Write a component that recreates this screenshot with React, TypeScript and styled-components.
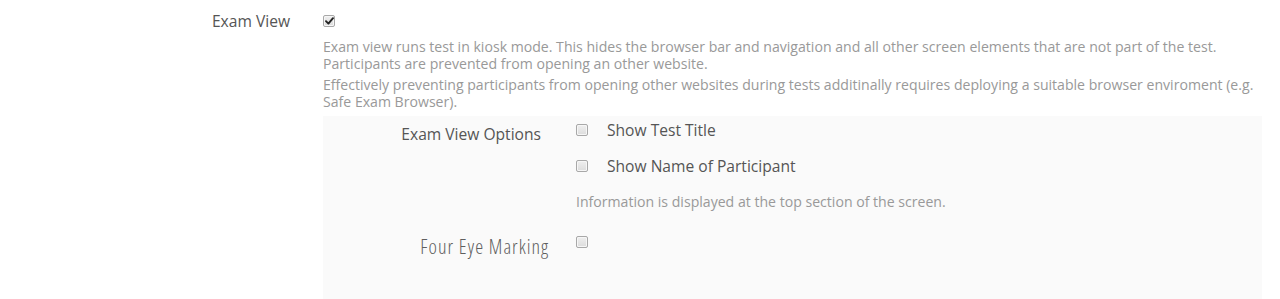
import React, { FC } from 'react';
import styled, { createGlobalStyle } from 'styled-components';

const GlobalStyle = createGlobalStyle`
    html, body {
        margin: 0;
        padding: 0;
        background: #ffffff;
    }
    body {
        font-family: "Open Sans", "Liberation Sans", sans-serif;
        color: #555555;
    }
`

type CheckProps = { checked?: boolean }

const CheckBox: FC<CheckProps> = ({ checked }) => (
    <CheckBoxStyled>
        {checked && (
            <svg width="9" height="8" viewBox="0 0 9 8">
                <path d="M1 4.2 L3.4 6.6 L8 1.2" fill="none" stroke="#222" strokeWidth="1.9" strokeLinecap="round" strokeLinejoin="round" />
            </svg>
        )}
    </CheckBoxStyled>
)

export default function App() {
    return (<PageWrapper>
        <GlobalStyle />
        <FormRow>
            <MainLabel>Exam View</MainLabel>
            <ControlColumn>
                <CheckLine>
                    <CheckBox checked />
                </CheckLine>
                <HelpText>
                    Exam view runs test in kiosk mode. This hides the browser bar and navigation and all other screen elements that are not part of the test.<br />
                    Participants are prevented from opening an other website.
                </HelpText>
                <HelpText $spaced>
                    Effectively preventing participants from opening other websites during tests additinally requires deploying a suitable browser enviroment (e.g. Safe Exam Browser).
                </HelpText>

                <SubPanel>
                    <SubRow>
                        <SubLabel>Exam View Options</SubLabel>
                        <OptionList>
                            <OptionItem>
                                <CheckBox />
                                <OptionText>Show Test Title</OptionText>
                            </OptionItem>
                            <OptionItem>
                                <CheckBox />
                                <OptionText>Show Name of Participant</OptionText>
                            </OptionItem>
                            <SubHelp>Information is displayed at the top section of the screen.</SubHelp>
                        </OptionList>
                    </SubRow>

                    <SubRow $top={21}>
                        <SubLabel $condensed>Four Eye Marking</SubLabel>
                        <OptionList>
                            <OptionItem>
                                <CheckBox />
                            </OptionItem>
                        </OptionList>
                    </SubRow>
                </SubPanel>
            </ControlColumn>
        </FormRow>
    </PageWrapper>
    )
}

const PageWrapper = styled.div`
    width: 1280px;
    height: 299px;
    overflow: hidden;
`

const FormRow = styled.div`
    display: grid;
    grid-template-columns: 290px 1fr;
    column-gap: 33px;
    padding-right: 18px;
    padding-top: 10px;
`

const MainLabel = styled.div`
    text-align: right;
    font-size: 15.6px;
    line-height: 22px;
    color: #555;
`

const ControlColumn = styled.div`
    display: flex;
    flex-direction: column;
`

const CheckLine = styled.div`
    display: flex;
    align-items: center;
    height: 22px;
`

const CheckBoxStyled = styled.span`
    flex: none;
    box-sizing: border-box;
    width: 12px;
    height: 12px;
    border: 1px solid #a8a8a8;
    border-radius: 2px;
    background: linear-gradient(#efefef, #dcdcdc);
    box-shadow: inset 0 0 0 1px #f6f6f6;
    display: flex;
    align-items: center;
    justify-content: center;
`

const HelpText = styled.p<{ $spaced?: boolean }>`
    margin: ${p => p.$spaced ? '4px' : '6px'} 0 0;
    font-size: 14.1px;
    line-height: 17px;
    color: #999;
`

const SubPanel = styled.div`
    margin-top: 6px;
    background: #fafafa;
    padding: 3px 0 60px;
`

const SubRow = styled.div<{ $top?: number }>`
    display: grid;
    grid-template-columns: 218px 1fr;
    column-gap: 35px;
    margin-top: ${p => p.$top || 0}px;
`

const SubLabel = styled.div<{ $condensed?: boolean }>`
    text-align: right;
    font-size: 15.6px;
    line-height: 22px;
    padding-top: 4px;
    color: #555;
    ${p => p.$condensed && `
        font-size: 20px;
        font-weight: 300;
        font-stretch: 75%;
        letter-spacing: 1px;
        margin-right: -8px;
        padding-top: 5px;
        color: #5f5f5f;
    `}
`

const OptionList = styled.div`
    display: flex;
    flex-direction: column;
    gap: 14px;
`

const OptionItem = styled.label`
    display: flex;
    align-items: center;
    gap: 19px;
    height: 22px;
`

const OptionText = styled.span`
    font-size: 15.6px;
    color: #555;
`

const SubHelp = styled.div`
    margin-top: 2px;
    font-size: 14.1px;
    line-height: 17px;
    color: #999;
`
